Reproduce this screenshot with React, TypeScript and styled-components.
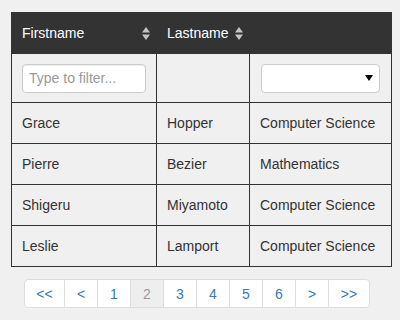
import React from 'react';
import styled, { createGlobalStyle } from 'styled-components';

const GlobalStyle = createGlobalStyle`
  html, body {
    margin: 0;
    padding: 0;
    background: #f0f0f0;
    font-family: "Liberation Sans", Arial, sans-serif;
  }
`;

const Page = styled.div`
  width: 400px;
  height: 320px;
  padding: 12px 0 0 11px;
  box-sizing: border-box;
  display: flex;
  flex-direction: column;
`;

const Table = styled.table`
  border-collapse: collapse;
  width: 380px;
  table-layout: fixed;
  font-size: 14px;
  color: #333;
`;

const HeadCell = styled.th<{ $w: number }>`
  width: ${p => p.$w}px;
  height: 41px;
  background: #333;
  color: #fff;
  font-weight: normal;
  text-align: left;
  padding: 0 6px 0 10px;
  border: 1px solid #333;
  box-sizing: border-box;
`;

const HeadInner = styled.div`
  display: flex;
  align-items: center;
  justify-content: space-between;
`;

const Cell = styled.td`
  height: 40px;
  padding: 0 10px;
  border: 1px solid #333;
  white-space: nowrap;
`;

const FilterCell = styled(Cell)`
  height: 48px;
`;

const FilterInput = styled.input`
  width: 124px;
  height: 29px;
  box-sizing: border-box;
  border: 1px solid #ccc;
  border-radius: 4px;
  padding: 0 6px;
  font-family: inherit;
  font-size: 14px;
  color: #333;
  box-shadow: inset 0 1px 1px rgba(0, 0, 0, 0.075);
  &::placeholder {
    color: #999;
  }
`;

const SelectBox = styled.div`
  width: 119px;
  height: 29px;
  margin-left: 1px;
  box-sizing: border-box;
  border: 1px solid #ccc;
  border-radius: 4px;
  background: #fff;
  display: flex;
  align-items: center;
  justify-content: flex-end;
  padding-right: 6px;
`;

const Pager = styled.ul`
  list-style: none;
  display: flex;
  margin: 12px 0 0 13px;
  padding: 0;
  font-size: 14px;
`;

const PageItem = styled.li<{ $w: number; $active?: boolean }>`
  width: ${p => p.$w}px;
  height: 29px;
  box-sizing: border-box;
  display: flex;
  align-items: center;
  justify-content: center;
  border: 1px solid #ddd;
  margin-left: -1px;
  background: ${p => (p.$active ? '#eee' : '#fff')};
  color: ${p => (p.$active ? '#999' : '#337ab7')};
  &:first-child {
    margin-left: 0;
    border-radius: 4px 0 0 4px;
  }
  &:last-child {
    border-radius: 0 4px 4px 0;
  }
`;

const SortIcon = () => (
  <svg width="8" height="13" viewBox="0 0 8 13">
    <path d="M4 0 L8 5.5 L0 5.5 Z" fill="#c4c4c4" />
    <path d="M0 7.5 L8 7.5 L4 13 Z" fill="#c4c4c4" />
  </svg>
);

const Caret = () => (
  <svg width="8" height="6" viewBox="0 0 8 6">
    <path d="M0 0 L8 0 L4 6 Z" fill="#000" />
  </svg>
);

const rows = [
  ['Grace', 'Hopper', 'Computer Science'],
  ['Pierre', 'Bezier', 'Mathematics'],
  ['Shigeru', 'Miyamoto', 'Computer Science'],
  ['Leslie', 'Lamport', 'Computer Science'],
];

const pages: { label: string; w: number; active?: boolean }[] = [
  { label: '<<', w: 41 },
  { label: '<', w: 34 },
  { label: '1', w: 34 },
  { label: '2', w: 34, active: true },
  { label: '3', w: 34 },
  { label: '4', w: 34 },
  { label: '5', w: 34 },
  { label: '6', w: 34 },
  { label: '>', w: 34 },
  { label: '>>', w: 42 },
];

export default function App() {
  return (
    <Page>
      <GlobalStyle />
      <Table>
        <thead>
          <tr>
            <HeadCell $w={145}>
              <HeadInner>Firstname <SortIcon /></HeadInner>
            </HeadCell>
            <HeadCell $w={93}>
              <HeadInner>Lastname <SortIcon /></HeadInner>
            </HeadCell>
            <HeadCell $w={142} />
          </tr>
        </thead>
        <tbody>
          <tr>
            <FilterCell>
              <FilterInput placeholder="Type to filter..." />
            </FilterCell>
            <FilterCell />
            <FilterCell>
              <SelectBox>
                <Caret />
              </SelectBox>
            </FilterCell>
          </tr>
          {rows.map(r => (
            <tr key={r[0]}>
              {r.map(c => (
                <Cell key={c}>{c}</Cell>
              ))}
            </tr>
          ))}
        </tbody>
      </Table>
      <Pager>
        {pages.map(p => (
          <PageItem key={p.label} $w={p.w} $active={p.active}>
            {p.label}
          </PageItem>
        ))}
      </Pager>
    </Page>
  );
}
